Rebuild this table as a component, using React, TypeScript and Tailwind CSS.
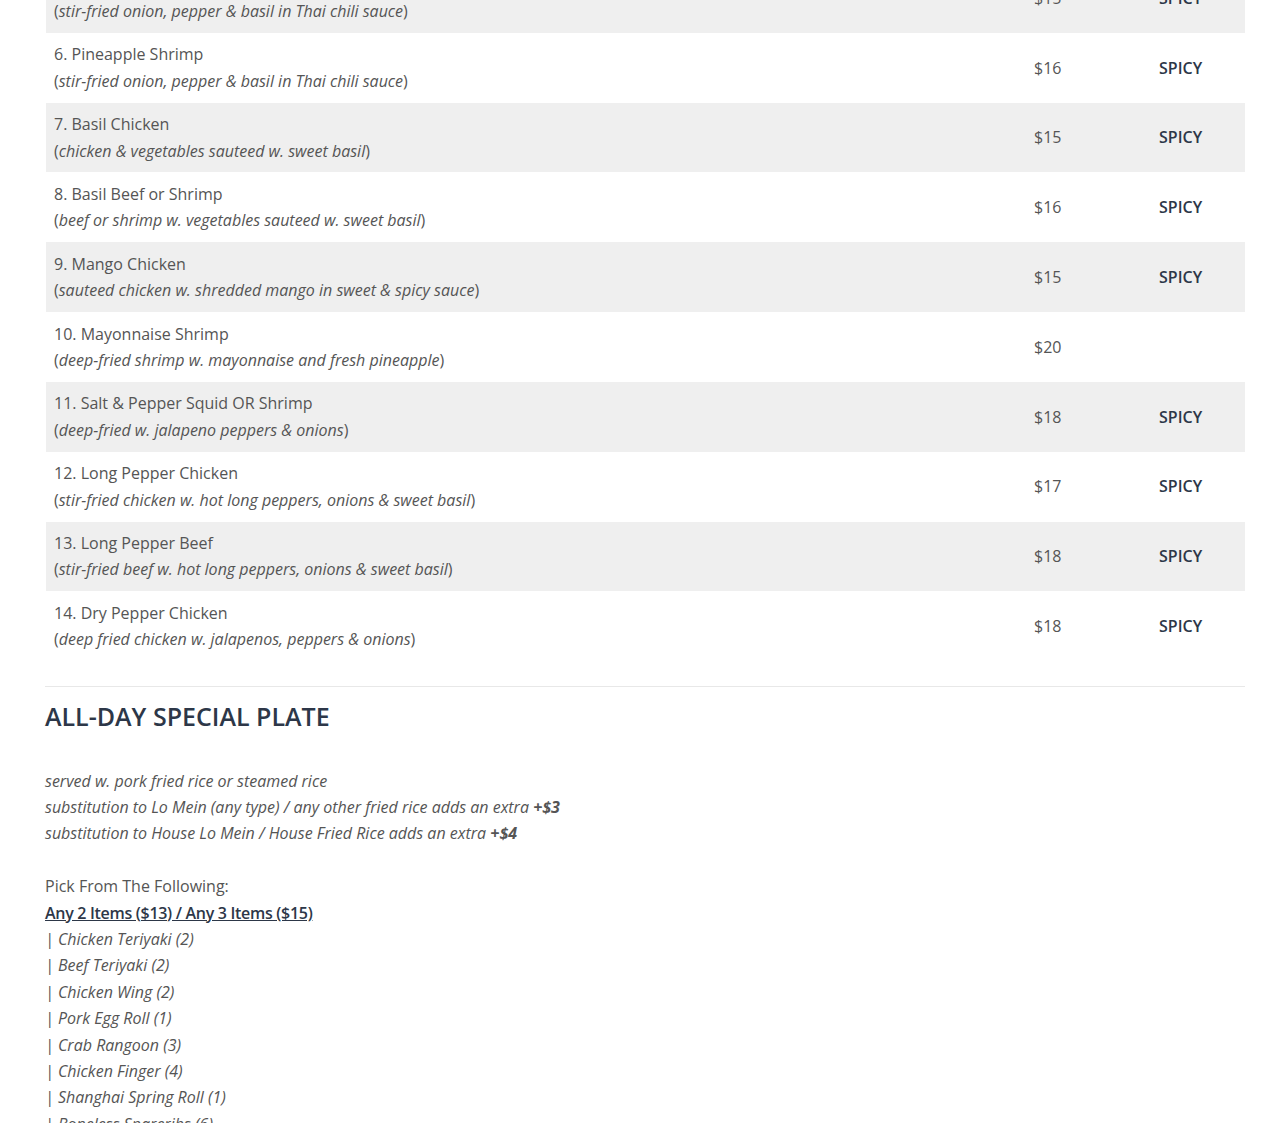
import React from "react";

type Row = { name: string; desc: string; price: string; spicy: boolean };

const rows: Row[] = [
  { name: "5. Pineapple Chicken", desc: "stir-fried onion, pepper & basil in Thai chili sauce", price: "$15", spicy: true },
  { name: "6. Pineapple Shrimp", desc: "stir-fried onion, pepper & basil in Thai chili sauce", price: "$16", spicy: true },
  { name: "7. Basil Chicken", desc: "chicken & vegetables sauteed w. sweet basil", price: "$15", spicy: true },
  { name: "8. Basil Beef or Shrimp", desc: "beef or shrimp w. vegetables sauteed w. sweet basil", price: "$16", spicy: true },
  { name: "9. Mango Chicken", desc: "sauteed chicken w. shredded mango in sweet & spicy sauce", price: "$15", spicy: true },
  { name: "10. Mayonnaise Shrimp", desc: "deep-fried shrimp w. mayonnaise and fresh pineapple", price: "$20", spicy: false },
  { name: "11. Salt & Pepper Squid OR Shrimp", desc: "deep-fried w. jalapeno peppers & onions", price: "$18", spicy: true },
  { name: "12. Long Pepper Chicken", desc: "stir-fried chicken w. hot long peppers, onions & sweet basil", price: "$17", spicy: true },
  { name: "13. Long Pepper Beef", desc: "stir-fried beef w. hot long peppers, onions & sweet basil", price: "$18", spicy: true },
  { name: "14. Dry Pepper Chicken", desc: "deep fried chicken w. jalapenos, peppers & onions", price: "$18", spicy: true },
];

const items = [
  "Chicken Teriyaki (2)",
  "Beef Teriyaki (2)",
  "Chicken Wing (2)",
  "Pork Egg Roll (1)",
  "Crab Rangoon (3)",
  "Chicken Finger (4)",
  "Shanghai Spring Roll (1)",
  "Boneless Spareribs (6)",
];

export default function App() {
  return (
    <div
      className="h-[1123px] overflow-hidden bg-white text-[16px] leading-[26.4px] text-[#555]"
      style={{ fontFamily: '"Open Sans", "Noto Sans", sans-serif' }}
    >
      <div className="ml-[45px] mr-[25px] -mt-[37px]">
        <div className="ml-px">
          {rows.map((r, i) => (
            <div
              key={i}
              className={`flex items-center py-[8.5px] ${i % 2 === 0 ? "bg-[#efefef]" : "bg-white"}`}
            >
              <div className="flex-1 pl-2">
                <div>{r.name}</div>
                <div>
                  (<em>{r.desc}</em>)
                </div>
              </div>
              <div className="w-[125px]">{r.price}</div>
              <div className="w-[86px] font-semibold text-[#2d3748]">{r.spicy ? "SPICY" : ""}</div>
            </div>
          ))}
        </div>
        <div className="mt-[25px] border-t border-[#e8e8e8]" />
        <h2 className="mt-[11px] text-[25px] leading-[36px] font-semibold text-[#2d3748]">
          ALL-DAY SPECIAL PLATE
        </h2>
        <div className="mt-[7px]">
          <div className="h-[26.4px]" />
          <div><em>served w. pork fried rice or steamed rice</em></div>
          <div>
            <em>substitution to Lo Mein (any type) / any other fried rice adds an extra <strong>+$3</strong></em>
          </div>
          <div>
            <em>substitution to House Lo Mein / House Fried Rice adds an extra <strong>+$4</strong></em>
          </div>
          <div className="h-[26.4px]" />
          <div>Pick From The Following:</div>
          <div>
            <span className="font-semibold underline tracking-[-0.3px] text-[#2d3748]">Any 2 Items ($13) / Any 3 Items ($15)</span>
          </div>
          {items.map((it) => (
            <div key={it}>
              <em>| {it}</em>
            </div>
          ))}
        </div>
      </div>
    </div>
  );
}
